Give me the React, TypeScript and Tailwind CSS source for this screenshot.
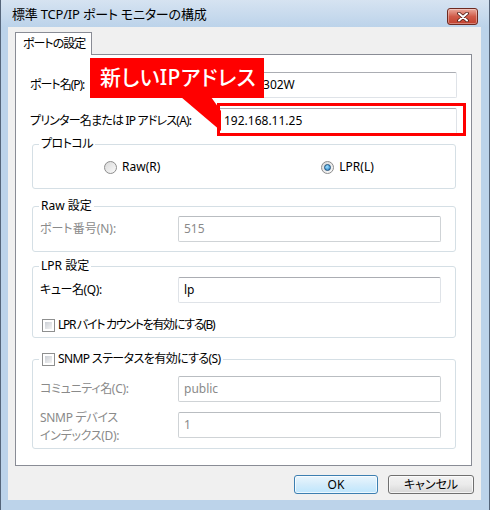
import React from "react";

function TextBox({ value, disabled, className = "" }: { value: string; disabled?: boolean; className?: string }) {
  return (
    <div
      className={
        "h-[26px] flex items-center px-[5px] bg-white border rounded-[2px] whitespace-nowrap overflow-hidden " +
        (disabled
          ? "border-[#cfd3d6] border-t-[#b9bdc1] text-[#8a8a8a] "
          : "border-[#dfe3e8] border-t-[#abadb3] text-black ") +
        className
      }
    >
      {value}
    </div>
  );
}

function Radio({ checked }: { checked?: boolean }) {
  return (
    <span className="w-[13px] h-[13px] rounded-full border border-[#8d8d8d] bg-gradient-to-br from-[#d9d9d9] to-[#fbfbfb] flex items-center justify-center">
      {checked && (
        <span className="w-[7px] h-[7px] rounded-full border border-[#1d4f7a] bg-[radial-gradient(circle_at_40%_35%,#9fe0ff,#1a78c2)]" />
      )}
    </span>
  );
}

function Check() {
  return (
    <span className="w-[13px] h-[13px] border border-[#8e8f8f] bg-white p-[2px] flex">
      <span className="flex-1 bg-gradient-to-br from-[#cbcfd5] to-[#f4f4f4]" />
    </span>
  );
}

export default function App() {
  return (
    <div className="relative w-[490px] h-[510px] bg-[#bcd3ea] border-l border-r border-[#55657a] flex flex-col text-[12px] text-black whitespace-nowrap [font-feature-settings:'palt'] font-['Noto_Sans','Noto_Sans_CJK_JP',sans-serif]">
      {/* Title bar */}
      <div className="h-[27px] flex items-start justify-between pl-[11px] pr-[11px] bg-gradient-to-b from-[#d6e3f1] to-[#bcd3ea]">
        <span className="text-[13px] tracking-[-0.2px] pt-[5px] leading-[18px]">標準 TCP/IP ポート モニターの構成</span>
        <div className="mt-[8px] w-[31px] h-[17px] rounded-[3px] border border-[#6e2a20] bg-gradient-to-b from-[#e9a99d] via-[#d05b49] to-[#c13f2d] flex items-center justify-center shadow-[inset_0_0_0_1px_rgba(255,255,255,0.35)]">
          <svg width="12" height="10" viewBox="0 0 12 10">
            <path d="M2 1.5 L10 8.5 M10 1.5 L2 8.5" stroke="#4b1a14" strokeWidth="3.6" strokeLinecap="round" />
            <path d="M2 1.5 L10 8.5 M10 1.5 L2 8.5" stroke="#ffffff" strokeWidth="2" strokeLinecap="round" />
          </svg>
        </div>
      </div>

      {/* Client area */}
      <div className="ml-[7px] mr-[8px] mb-[10px] flex-1 bg-[#f0f0f0] pl-[7px] pt-[5px] flex flex-col">
        {/* Tab header */}
        <div className="relative z-10 -mb-px w-[77px] h-[23px] bg-white border border-b-0 border-[#898c95] pl-[7px] flex items-center tracking-[-1px]">
          ポートの設定
        </div>

        {/* Tab panel */}
        <div className="w-[457px] h-[412px] bg-white border border-[#898c95] pt-[17px] flex flex-col">
          <div className="flex items-center pl-[14px]">
            <span className="w-[188px] tracking-[-1px]">ポート名(P):</span>
            <TextBox value="EPSON302W" className="w-[239px] h-[25px]" />
          </div>
          <div className="flex items-center pl-[14px] mt-[10px]">
            <span className="w-[188px] tracking-[-0.8px]">プリンター名または IP アドレス(A):</span>
            <TextBox value="192.168.11.25" className="w-[239px] h-[25px]" />
          </div>

          {/* Protocol */}
          <fieldset className="ml-[16px] mt-[2px] w-[424px] border border-[#d5dfe5] rounded-[3px]">
            <legend className="ml-[6px] px-[2px] leading-[16px] tracking-[-0.5px]">プロトコル</legend>
            <div className="flex items-center h-[16px] mt-[7px] mb-[13px] pl-[71px]">
              <span className="flex items-center gap-[5px]">
                <Radio />
                Raw(R)
              </span>
              <span className="flex items-center gap-[5px] ml-[161px]">
                <Radio checked />
                LPR(L)
              </span>
            </div>
          </fieldset>

          {/* Raw settings */}
          <fieldset className="ml-[16px] mt-[9px] w-[424px] border border-[#d5dfe5] rounded-[3px]">
            <legend className="ml-[6px] px-[2px] leading-[16px]">Raw 設定</legend>
            <div className="flex items-center pl-[7px] mt-[2px] mb-[9px]">
              <span className="w-[138px] text-[#8a8a8a]">ポート番号(N):</span>
              <TextBox value="515" disabled className="w-[263px]" />
            </div>
          </fieldset>

          {/* LPR settings */}
          <fieldset className="ml-[16px] mt-[6px] w-[424px] border border-[#d5dfe5] rounded-[3px]">
            <legend className="ml-[6px] px-[2px] leading-[16px]">LPR 設定</legend>
            <div className="flex items-center pl-[7px] mt-[3px]">
              <span className="w-[138px] tracking-[-0.4px]">キュー名(Q):</span>
              <TextBox value="lp" className="w-[263px]" />
            </div>
            <div className="flex items-center gap-[3px] h-[16px] pl-[9px] mt-[14px] mb-[4px] tracking-[-1.3px]">
              <Check />
              LPR バイト カウントを有効にする(B)
            </div>
          </fieldset>

          {/* SNMP */}
          <fieldset className="ml-[16px] mt-[13px] w-[424px] border border-[#d5dfe5] rounded-[3px]">
            <legend className="ml-[6px] px-[2px] leading-[16px] flex items-center gap-[3px] tracking-[-0.6px]">
              <span className="ml-[1px]">
                <Check />
              </span>
              SNMP ステータスを有効にする(S)
            </legend>
            <div className="flex items-center pl-[7px] mt-[9px]">
              <span className="w-[138px] text-[#8a8a8a] tracking-[-0.3px]">コミュニティ名(C):</span>
              <TextBox value="public" disabled className="w-[263px]" />
            </div>
            <div className="flex items-start pl-[7px] mt-[7px] mb-[3px]">
              <span className="w-[138px] text-[#8a8a8a] leading-[18px] tracking-[-0.3px]">
                SNMP デバイス
                <br />
                インデックス(D):
              </span>
              <TextBox value="1" disabled className="w-[263px] h-[25px] mt-[3px]" />
            </div>
          </fieldset>
        </div>

        {/* Buttons */}
        <div className="flex justify-end gap-[10px] mt-[9px] w-[459px]">
          <button className="w-[84px] h-[19px] rounded-[3px] border border-[#3c7fb1] bg-gradient-to-b from-[#eaf6fd] via-[#d4ecfb] to-[#bee6fd] shadow-[inset_0_0_0_1px_rgba(255,255,255,0.7)] text-[12px] leading-none">
            OK
          </button>
          <button className="w-[86px] h-[19px] rounded-[3px] border border-[#707070] bg-gradient-to-b from-[#f2f2f2] via-[#ebebeb] to-[#d6d6d6] shadow-[inset_0_0_0_1px_rgba(255,255,255,0.7)] text-[12px] leading-none">
            キャンセル
          </button>
        </div>
      </div>

      {/* Annotation: callout and highlight */}
      <div className="absolute left-[216px] top-[103px] w-[249px] h-[33px] border-[3px] border-[#ff0000]" />
      <svg className="absolute left-0 top-0 pointer-events-none" width="490" height="510">
        <polygon points="180,97 210,97 220,111 220,131" fill="#ff0000" />
      </svg>
      <div className="absolute left-[89px] top-[58px] w-[174px] h-[40px] bg-[#ff0000] text-white text-[21px] font-medium tracking-[0.4px] flex items-center pl-[10px]">
        新しいIPアドレス
      </div>
    </div>
  );
}
